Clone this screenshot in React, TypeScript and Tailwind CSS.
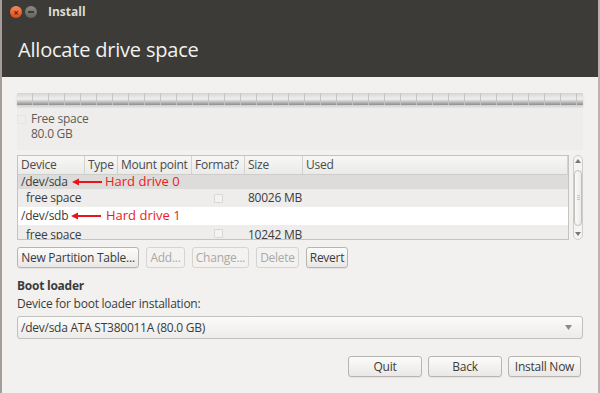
import React from "react";

const font = { fontFamily: '"Open Sans", "Noto Sans", sans-serif' };

function Btn({ children, disabled, w }: { children: React.ReactNode; disabled?: boolean; w: string }) {
  return (
    <div
      className={`${w} h-[21px] flex items-center justify-center rounded-[3px] border text-[12px] tracking-[-0.25px] whitespace-nowrap ${
        disabled
          ? "border-[#d6d4d1] text-[#aaa8a5] bg-[#f3f2f1]"
          : "border-[#b8b5b1] text-[#3c3c3c] bg-gradient-to-b from-[#fbfbfa] to-[#e9e8e6] shadow-[0_1px_0_rgba(0,0,0,0.06)]"
      }`}
    >
      {children}
    </div>
  );
}

function Arrow() {
  return (
    <svg width="30" height="8" viewBox="0 0 30 8" className="shrink-0">
      <line x1="4" y1="4" x2="30" y2="4" stroke="#e8141a" strokeWidth="2" />
      <polygon points="0,4 7,0.5 7,7.5" fill="#e8141a" />
    </svg>
  );
}

function Check() {
  return <div className="w-[9px] h-[9px] border border-[#d8d7d5] rounded-[1px] bg-[#f3f3f2]" />;
}

export default function App() {
  const cols = ["w-[67px]", "w-[33px]", "w-[74px]", "w-[53px]", "w-[58px]", "flex-1"];
  return (
    <div className="w-[600px] h-[393px] flex flex-col border-l-2 border-l-[#a59e98] border-r-2 border-r-[#bfb0b0] overflow-hidden" style={font}>
      <div className="h-[77px] bg-[#3c3b37] flex flex-col shrink-0">
        <div className="h-[24px] flex items-center pl-[8px]">
          <div className="w-[12px] h-[12px] rounded-full bg-gradient-to-b from-[#f58a5b] to-[#dd4814] flex items-center justify-center text-[#5a1f08] text-[9px] leading-none font-bold">×</div>
          <div className="ml-[3px] w-[12px] h-[12px] rounded-full bg-gradient-to-b from-[#8a8983] to-[#65645f] flex items-center justify-center">
            <div className="w-[6px] h-[1.5px] bg-[#3c3b37]" />
          </div>
          <div className="ml-[11px] text-[12px] font-bold text-[#dfdbd2]">Install</div>
        </div>
        <div className="pl-[16px] pt-[13px] text-[20px] leading-[26px] text-[#f2f1f0] tracking-[-0.2px]">Allocate drive space</div>
      </div>
      <div className="flex-1 bg-[#f2f1f0] px-[15px] pt-[16px] flex flex-col text-[12px] tracking-[-0.25px]">
        <div className="h-[57px] bg-[#eeedeb] flex flex-col">
          <div className="h-[12px] flex overflow-hidden bg-gradient-to-b from-[#d4d4d4] via-[#f0f0f0] to-[#8d8d8d] shadow-[0_2px_2px_rgba(0,0,0,0.12)]">
            {Array.from({ length: 36 }).map((_, i) => (
              <div key={i} className="w-[16px] h-full shrink-0 border-r border-r-[#c4c4c4]" />
            ))}
          </div>
          <div className="flex mt-[6px]">
            <div className="w-[9px] h-[9px] mt-[4px] border border-[#e6e5e3] bg-[#eeedeb]" />
            <div className="ml-[5px] text-[#5e5c59]">
              <div className="leading-[15px]">Free space</div>
              <div className="leading-[15px]">80.0 GB</div>
            </div>
          </div>
        </div>
        <div className="mt-[5px] flex">
          <div className="w-[552px] h-[85px] border border-[#c5c3c0] bg-white flex flex-col overflow-hidden text-[#3c3c3c] whitespace-nowrap">
            <div className="h-[19px] flex border-b border-b-[#cfcdca] bg-gradient-to-b from-[#f7f7f6] to-[#eaeae8] shrink-0">
              {["Device", "Type", "Mount point", "Format?", "Size", "Used"].map((h, i) => (
                <div key={h} className={`${cols[i]} shrink-0 px-[3px] flex items-center border-r border-r-[#d4d2cf] text-[#4a4a4a] overflow-hidden`}>{h}</div>
              ))}
            </div>
            <div className="h-[14px] flex items-center bg-[#dddcda] shrink-0">
              <div className="pl-[3px] w-[54px] shrink-0">/dev/sda</div>
              <Arrow />
              <div className="ml-[3px] text-[13px] tracking-normal text-[#ee1a1a]">Hard drive 0</div>
            </div>
            <div className="h-[18px] flex items-center bg-[#eeedec] shrink-0">
              <div className={`${cols[0]} shrink-0 pl-[8px]`}>free space</div>
              <div className={`${cols[1]} shrink-0`} />
              <div className={`${cols[2]} shrink-0`} />
              <div className={`${cols[3]} shrink-0 flex justify-center`}><Check /></div>
              <div className={`${cols[4]} shrink-0 pl-[3px]`}>80026 MB</div>
            </div>
            <div className="h-[18px] flex items-center bg-white shrink-0">
              <div className="pl-[3px] w-[53px] shrink-0">/dev/sdb</div>
              <Arrow />
              <div className="ml-[5px] text-[13px] tracking-normal text-[#ee1a1a]">Hard drive 1</div>
            </div>
            <div className="h-[18px] flex items-start pt-[1px] bg-[#eeedec] shrink-0">
              <div className={`${cols[0]} shrink-0 pl-[8px]`}>free space</div>
              <div className={`${cols[1]} shrink-0`} />
              <div className={`${cols[2]} shrink-0`} />
              <div className={`${cols[3]} shrink-0 flex justify-center pt-[3px]`}><Check /></div>
              <div className={`${cols[4]} shrink-0 pl-[3px]`}>10242 MB</div>
            </div>
          </div>
          <div className="ml-[4px] w-[10px] h-[85px] rounded-[5px] border border-[#cfcdca] bg-[#f4f4f3] flex flex-col items-center justify-between py-[3px]">
            <svg width="6" height="4" viewBox="0 0 6 4"><polygon points="3,0 6,4 0,4" fill="#777" /></svg>
            <div className="w-[8px] h-[56px] rounded-[4px] border border-[#c2c0bd] bg-gradient-to-r from-[#fafafa] to-[#ebebea] flex flex-col items-center justify-center gap-[1px]">
              <div className="w-[3px] h-px bg-[#c8c8c8]" />
              <div className="w-[3px] h-px bg-[#c8c8c8]" />
              <div className="w-[3px] h-px bg-[#c8c8c8]" />
            </div>
            <svg width="6" height="4" viewBox="0 0 6 4"><polygon points="0,0 6,0 3,4" fill="#777" /></svg>
          </div>
        </div>
        <div className="mt-[7px] flex gap-[7px]">
          <Btn w="w-[122px]">New Partition Table...</Btn>
          <Btn w="w-[39px]" disabled>Add...</Btn>
          <Btn w="w-[57px]" disabled>Change...</Btn>
          <Btn w="w-[43px]" disabled>Delete</Btn>
          <Btn w="w-[42px]">Revert</Btn>
        </div>
        <div className="mt-[10px] font-bold text-[#3c3c3c] leading-[16px]">Boot loader</div>
        <div className="mt-[2px] text-[#3c3c3c] leading-[16px]">Device for boot loader installation:</div>
        <div className="mt-[4px] h-[23px] rounded-[3px] border border-[#c2c0bd] bg-gradient-to-b from-[#fbfbfa] to-[#ecebe9] flex items-center justify-between px-[3px] text-[#3c3c3c]">
          <span>/dev/sda ATA ST380011A (80.0 GB)</span>
          <svg width="7" height="5" viewBox="0 0 7 5" className="mr-[7px]"><polygon points="0,0 7,0 3.5,5" fill="#8a8a8a" /></svg>
        </div>
        <div className="mt-[17px] flex justify-end gap-[6px] pr-[2px]">
          <Btn w="w-[74px]">Quit</Btn>
          <Btn w="w-[74px]">Back</Btn>
          <Btn w="w-[73px]">Install Now</Btn>
        </div>
      </div>
    </div>
  );
}
